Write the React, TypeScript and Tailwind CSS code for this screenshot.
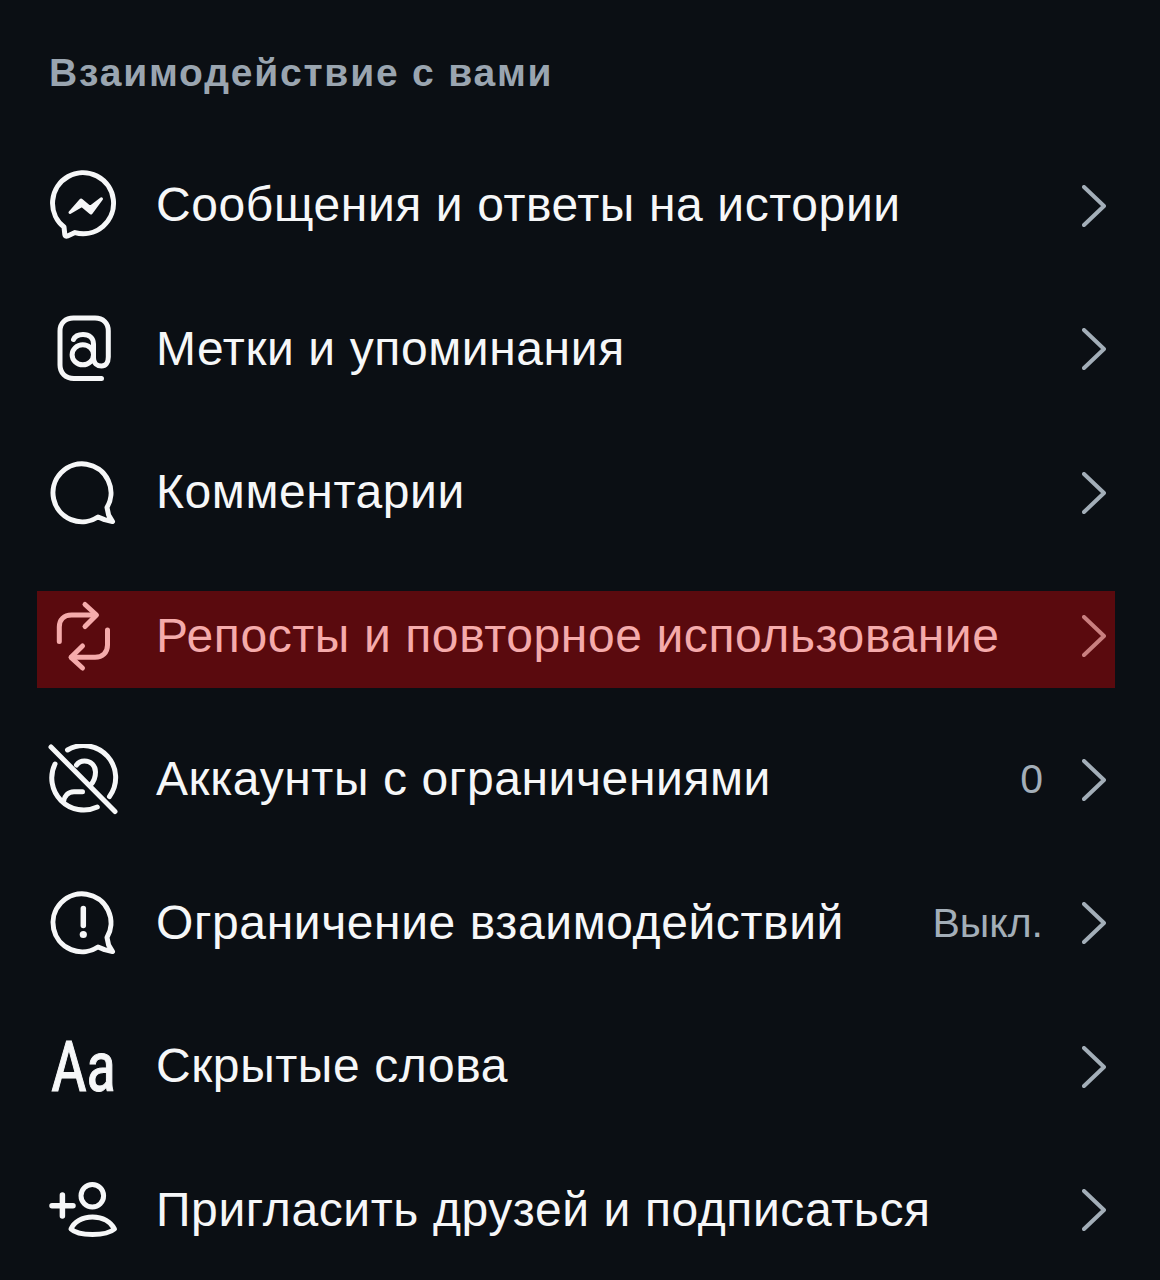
import type { ReactNode } from 'react';

interface Row {
  label: string;
  icon: ReactNode;
  value?: string;
  highlighted?: boolean;
}

// All row icons share a 72x72 box
function Icon({ children }: { children: ReactNode }) {
  return (
    <svg
      viewBox="0 0 72 72"
      fill="none"
      stroke="currentColor"
      strokeWidth={5}
      strokeLinecap="round"
      strokeLinejoin="round"
      className="w-[72px] h-[72px] shrink-0"
    >
      {children}
    </svg>
  );
}

const rows: Row[] = [
  {
    label: 'Сообщения и ответы на истории',
    icon: (
      <Icon>
        <g transform="translate(2 0)">
          <path d="M15 57 L15.8 64.5 Q16.2 67 18.6 66 L26 62.6 A30.5 30.5 0 1 0 15 57 Z" />
          <path
            d="M21 42.5 L32 30 L41 37.5 L52.5 28.8 L42 43 L33 35.5 Z"
            fill="currentColor"
            strokeWidth={3}
          />
        </g>
      </Icon>
    ),
  },
  {
    label: 'Метки и упоминания',
    icon: (
      <Icon>
        <path d="M54.5 65.5 H27 C18.5 65.5 13 60 13 52 V18 C13 10 18.5 5 26.5 5 H48 C56 5 61.3 10 61.3 18 V44 C61.3 50 58.5 53 54.5 53 C50 53 46.5 50 46.5 45 V31 C46.5 25 42.5 21.5 36 21.5 C31.5 21.5 28 23.2 26.5 26.5" />
        <ellipse cx="35.8" cy="41.8" rx="10.7" ry="10" />
      </Icon>
    ),
  },
  {
    label: 'Комментарии',
    icon: (
      <Icon>
        <path d="M60 50.5 L61.6 58 L65.5 64.5 L57.5 62.6 L51 60 A29 29 0 1 1 60 50.5 Z" />
      </Icon>
    ),
  },
  {
    label: 'Репосты и повторное использование',
    highlighted: true,
    icon: (
      <Icon>
        <path d="M12.3 41.5 V27 C12.3 19.5 17 15 24.5 15 H48" />
        <path d="M38 4.5 L49.5 15 L38 26.5" />
        <path d="M60.5 30 V45 C60.5 52.5 55.5 57.3 48 57.3 H24.5" />
        <path d="M35.5 46 L24 57.3 L35.5 68" />
      </Icon>
    ),
  },
  {
    label: 'Аккаунты с ограничениями',
    value: '0',
    icon: (
      <Icon>
        <g transform="translate(-1 0)">
          <path d="M5 3 L69 67.5" />
          <path d="M9 20 A32 32 0 0 0 51.3 63" />
          <path d="M21.5 6 A32 32 0 0 1 63.5 52.5" />
          <path d="M30.5 21 C32.5 18.2 35.2 17 38.5 17 C44.5 17 49.5 21.5 49.5 28 C49.5 33 47.5 38 44.5 41" />
          <path d="M36.5 47.7 H28 C22 47.7 18.5 52 17.5 57.5" />
        </g>
      </Icon>
    ),
  },
  {
    label: 'Ограничение взаимодействий',
    value: 'Выкл.',
    icon: (
      <Icon>
        <path d="M60 50.5 L61.6 58 L65.5 64.5 L57.5 62.6 L51 60 A29 29 0 1 1 60 50.5 Z" />
        <path d="M36.3 21.5 V38.5" strokeWidth={5.5} />
        <circle cx="36.3" cy="47.5" r="3.6" fill="currentColor" stroke="none" />
      </Icon>
    ),
  },
  {
    label: 'Скрытые слова',
    icon: (
      <span className="w-[72px] h-[72px] shrink-0 flex items-center justify-center text-[70px] leading-none tracking-[-1px] [-webkit-text-stroke:1px_currentColor] font-['Liberation_Sans_Narrow','Roboto_Condensed',sans-serif] scale-x-[0.9]">
        Aa
      </span>
    ),
  },
  {
    label: 'Пригласить друзей и подписаться',
    icon: (
      <Icon>
        <circle cx="45.3" cy="21.7" r="11.3" />
        <path d="M24 55 C27 48 35 43 45.5 43 C56 43 64 48 67.5 55 C63 59 55 60.5 45.5 60.5 C36 60.5 28 59 24 55 Z" />
        <path d="M5 31.7 H26 M15.4 21 V42" strokeWidth={5.5} />
      </Icon>
    ),
  },
];

function SettingsRow({ label, icon, value, highlighted }: Row) {
  return (
    <div className="h-[143.5px] flex items-center">
      {/* the bar sits 3px below the centre of its content */}
      <div
        className={`ml-[37px] mr-[45px] mt-[6px] pb-[6px] w-full h-[97px] flex items-center pl-[10px] pr-[9px] gap-[37px] ${
          highlighted ? 'bg-[#5a0a0e] text-[#f5abab]' : 'text-[#f6f7f8]'
        }`}
      >
        {icon}
        <span className="flex-1 text-[48px] leading-none tracking-[0.6px] whitespace-nowrap -mt-[1px]">{label}</span>
        {value && <span className="text-[#a3aeb8] text-[41px] leading-none mr-[2px]">{value}</span>}
        <svg
          viewBox="0 0 24 42"
          fill="none"
          stroke="currentColor"
          strokeWidth={4}
          strokeLinecap="round"
          strokeLinejoin="round"
          className={`w-[24px] h-[42px] shrink-0 ${highlighted ? 'text-[#c97f7f]' : 'text-[#a3aeb8]'}`}
        >
          <path d="M2 2 L22 21 L2 40" />
        </svg>
      </div>
    </div>
  );
}

export default function App() {
  return (
    <div className="w-[1160px] h-[1280px] overflow-hidden bg-[#0b0f14] font-['Liberation_Sans','Noto_Sans',sans-serif]">
      <h2 className="pt-[50px] pl-[49px] h-[134px] text-[39px] leading-[46px] font-bold tracking-[1.8px] text-[#9aa5b0]">
        Взаимодействие с вами
      </h2>
      {rows.map((row) => (
        <SettingsRow key={row.label} {...row} />
      ))}
    </div>
  );
}
